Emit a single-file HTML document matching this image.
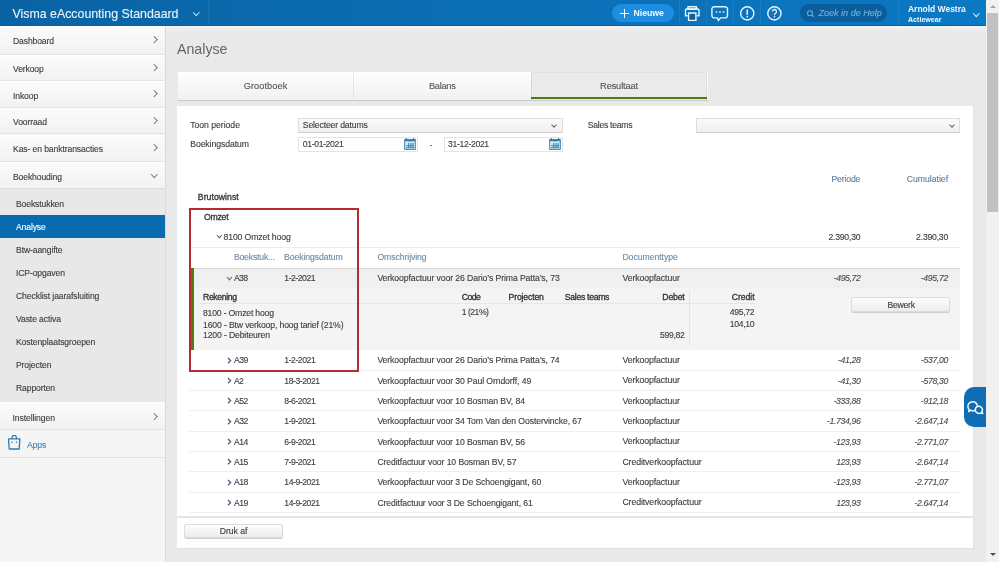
<!DOCTYPE html>
<html><head><meta charset="utf-8">
<style>
*{box-sizing:border-box;margin:0;padding:0}
html,body{width:999px;height:562px;overflow:hidden;background:#e9e9e9;font-family:"Liberation Sans",sans-serif;color:#444}
#wrap{left:0;top:0;width:999px;height:562px;will-change:transform}
div,span,i,svg{position:absolute;white-space:nowrap;line-height:1}
</style></head><body>
<div id="wrap"><div style="left:0px;top:0px;width:986px;height:26px;background:linear-gradient(to right,#0a63a3,#0b6eb4 50%,#0b79c4);border-bottom:1px solid #0a5f9c"></div>
<div style="left:12.50px;top:7.74px;font-size:12.36px;color:#e6f3fc;letter-spacing:-0.002px;-webkit-text-stroke:0.12px #e6f3fc;">Visma eAccounting Standaard</div>
<i style="left:194px;top:10px;width:4.5px;height:4.5px;border-right:1px solid #cfe6f7;border-bottom:1px solid #cfe6f7;transform:rotate(45deg)"></i>
<div style="left:208px;top:0px;width:1px;height:25px;background:rgba(255,255,255,0.07)"></div>
<div style="left:679px;top:0px;width:1px;height:25px;background:rgba(255,255,255,0.07)"></div>
<div style="left:706px;top:0px;width:1px;height:25px;background:rgba(255,255,255,0.07)"></div>
<div style="left:733px;top:0px;width:1px;height:25px;background:rgba(255,255,255,0.07)"></div>
<div style="left:760px;top:0px;width:1px;height:25px;background:rgba(255,255,255,0.07)"></div>
<div style="left:898px;top:0px;width:1px;height:25px;background:rgba(255,255,255,0.07)"></div>
<div style="left:612px;top:3.5px;width:62px;height:18.5px;border-radius:10px;background:#1d8de0"></div>
<div style="left:620px;top:12.6px;width:9px;height:1.7px;background:#fff"></div>
<div style="left:623.65px;top:8.8px;width:1.7px;height:9.3px;background:#fff"></div>
<div style="left:633.50px;top:9.49px;font-size:8.7px;color:#f2f9ff;letter-spacing:0.008px;font-weight:bold;">Nieuwe</div>
<div style="left:800px;top:3.6px;width:86.5px;height:18.6px;border-radius:10px;background:#0a5e9b"></div>
<div style="left:818.40px;top:9.30px;font-size:9.122px;color:#79b0da;letter-spacing:-0.021px;font-style:italic;-webkit-text-stroke:0.12px #79b0da;">Zoek in de Help</div>
<div style="left:908.00px;top:4.79px;font-size:8.47px;color:#f2f9ff;letter-spacing:-0.003px;font-weight:bold;">Arnold Westra</div>
<div style="left:908.00px;top:16.70px;font-size:7.1px;color:#f2f9ff;letter-spacing:-0.006px;font-weight:bold;">Actiewear</div>
<i style="left:973.8px;top:11px;width:4.5px;height:4.5px;border-right:1px solid #e6f3fc;border-bottom:1px solid #e6f3fc;transform:rotate(45deg)"></i>
<svg style="left:684px;top:5px" width="17" height="17" viewBox="0 0 17 17"><g fill="none" stroke="#eaf6ff" stroke-width="1.4" stroke-linejoin="round"><rect x="3.9" y="1.7" width="8.6" height="2.6"/><path d="M3.6 10.8 H1.5 V5.2 a1.2 1.2 0 0 1 1.2 -1.2 H13.8 a1.2 1.2 0 0 1 1.2 1.2 V10.8 H12.9"/><rect x="4.6" y="8" width="7.3" height="7.4" fill="#0b5e9e"/></g></svg>
<svg style="left:711px;top:5px" width="18" height="17" viewBox="0 0 18 17"><path d="M3.3 1.7 H14.1 a2.4 2.4 0 0 1 2.4 2.4 V10.5 a2.4 2.4 0 0 1 -2.4 2.4 H9.6 L7.3 15.6 L6.6 12.9 H3.3 a2.4 2.4 0 0 1 -2.4 -2.4 V4.1 a2.4 2.4 0 0 1 2.4 -2.4 Z" fill="none" stroke="#eaf6ff" stroke-width="1.4" stroke-linejoin="round"/><g fill="#a9d6f5"><circle cx="5.5" cy="7" r="1.1"/><circle cx="9" cy="7" r="1.1"/><circle cx="12.5" cy="7" r="1.1"/></g></svg>
<svg style="left:739px;top:5px" width="17" height="17" viewBox="0 0 17 17"><circle cx="8.25" cy="8.4" r="6.6" fill="none" stroke="#eaf6ff" stroke-width="1.4"/><rect x="7.5" y="4.6" width="1.5" height="5.2" fill="#eaf6ff"/><rect x="7.5" y="10.9" width="1.5" height="1.5" fill="#eaf6ff"/></svg>
<svg style="left:766px;top:5px" width="17" height="17" viewBox="0 0 17 17"><circle cx="8.4" cy="8.4" r="6.6" fill="none" stroke="#eaf6ff" stroke-width="1.4"/><path d="M6.3 6.6 a2.1 2.1 0 1 1 3 1.9 c-0.6 0.3 -0.8 0.7 -0.8 1.4 v0.4" fill="none" stroke="#eaf6ff" stroke-width="1.3"/><rect x="7.8" y="11" width="1.4" height="1.4" fill="#eaf6ff"/></svg>
<svg style="left:806px;top:9px" width="10" height="10" viewBox="0 0 10 10"><circle cx="4" cy="4.2" r="2.5" fill="none" stroke="#6badde" stroke-width="1.1"/><path d="M5.9 6.1 L7.7 7.8" stroke="#6badde" stroke-width="1.2"/></svg>
<div style="left:166px;top:26px;width:820px;height:6px;background:linear-gradient(#f1f3f5,#e9e9e9)"></div>
<div style="left:0px;top:26px;width:166px;height:536px;background:#f5f5f5;border-right:1px solid #dadada"></div>
<div style="left:0px;top:26px;width:165px;height:28.5px;background:linear-gradient(#fbfbfb,#f2f2f2);border-bottom:1px solid #e3e3e3;box-shadow:inset 0 1px 0 #fff"></div>
<div style="left:13.00px;top:37.48px;font-size:8.61px;color:#3c3c3c;letter-spacing:-0.128px;-webkit-text-stroke:0.12px #3c3c3c;">Dashboard</div>
<i style="left:152.3px;top:37.2px;width:4.5px;height:4.5px;border-right:1px solid #777;border-top:1px solid #777;transform:rotate(45deg)"></i>
<div style="left:0px;top:54.5px;width:165px;height:26.7px;background:linear-gradient(#fbfbfb,#f2f2f2);border-bottom:1px solid #e3e3e3;box-shadow:inset 0 1px 0 #fff"></div>
<div style="left:13.00px;top:65.08px;font-size:8.61px;color:#3c3c3c;letter-spacing:-0.128px;-webkit-text-stroke:0.12px #3c3c3c;">Verkoop</div>
<i style="left:152.3px;top:64.8px;width:4.5px;height:4.5px;border-right:1px solid #777;border-top:1px solid #777;transform:rotate(45deg)"></i>
<div style="left:0px;top:81.2px;width:165px;height:26.6px;background:linear-gradient(#fbfbfb,#f2f2f2);border-bottom:1px solid #e3e3e3;box-shadow:inset 0 1px 0 #fff"></div>
<div style="left:13.00px;top:91.73px;font-size:8.61px;color:#3c3c3c;letter-spacing:-0.126px;-webkit-text-stroke:0.12px #3c3c3c;">Inkoop</div>
<i style="left:152.3px;top:91.45px;width:4.5px;height:4.5px;border-right:1px solid #777;border-top:1px solid #777;transform:rotate(45deg)"></i>
<div style="left:0px;top:107.8px;width:165px;height:26.7px;background:linear-gradient(#fbfbfb,#f2f2f2);border-bottom:1px solid #e3e3e3;box-shadow:inset 0 1px 0 #fff"></div>
<div style="left:13.00px;top:118.38px;font-size:8.61px;color:#3c3c3c;letter-spacing:-0.122px;-webkit-text-stroke:0.12px #3c3c3c;">Voorraad</div>
<i style="left:152.3px;top:118.10000000000001px;width:4.5px;height:4.5px;border-right:1px solid #777;border-top:1px solid #777;transform:rotate(45deg)"></i>
<div style="left:0px;top:134.5px;width:165px;height:27.3px;background:linear-gradient(#fbfbfb,#f2f2f2);border-bottom:1px solid #e3e3e3;box-shadow:inset 0 1px 0 #fff"></div>
<div style="left:13.00px;top:145.38px;font-size:8.61px;color:#3c3c3c;letter-spacing:-0.102px;-webkit-text-stroke:0.12px #3c3c3c;">Kas- en banktransacties</div>
<i style="left:152.3px;top:145.1px;width:4.5px;height:4.5px;border-right:1px solid #777;border-top:1px solid #777;transform:rotate(45deg)"></i>
<div style="left:0px;top:161.8px;width:165px;height:27.0px;background:linear-gradient(#fbfbfb,#f2f2f2);border-bottom:1px solid #e3e3e3;box-shadow:inset 0 1px 0 #fff"></div>
<div style="left:13.00px;top:172.53px;font-size:8.61px;color:#3c3c3c;letter-spacing:-0.123px;-webkit-text-stroke:0.12px #3c3c3c;">Boekhouding</div>
<i style="left:152px;top:172.10000000000002px;width:4.5px;height:4.5px;border-right:1px solid #777;border-bottom:1px solid #777;transform:rotate(45deg)"></i>
<div style="left:0px;top:188.3px;width:165px;height:214px;background:#e8e8e8;border-top:1px solid #dcdcdc"></div>
<div style="left:16.00px;top:200.13px;font-size:8.61px;color:#3c3c3c;letter-spacing:-0.120px;-webkit-text-stroke:0.12px #3c3c3c;">Boekstukken</div>
<div style="left:0px;top:215px;width:165px;height:23px;background:#0a6ab0"></div>
<div style="left:16.00px;top:223.13px;font-size:8.61px;color:#fff;letter-spacing:-0.125px;-webkit-text-stroke:0.12px #fff;">Analyse</div>
<div style="left:16.00px;top:246.13px;font-size:8.61px;color:#3c3c3c;letter-spacing:-0.106px;-webkit-text-stroke:0.12px #3c3c3c;">Btw-aangifte</div>
<div style="left:16.00px;top:269.13px;font-size:8.61px;color:#3c3c3c;letter-spacing:-0.123px;-webkit-text-stroke:0.12px #3c3c3c;">ICP-opgaven</div>
<div style="left:16.00px;top:292.13px;font-size:8.61px;color:#3c3c3c;letter-spacing:-0.091px;-webkit-text-stroke:0.12px #3c3c3c;">Checklist jaarafsluiting</div>
<div style="left:16.00px;top:315.13px;font-size:8.61px;color:#3c3c3c;letter-spacing:-0.103px;-webkit-text-stroke:0.12px #3c3c3c;">Vaste activa</div>
<div style="left:16.00px;top:338.13px;font-size:8.61px;color:#3c3c3c;letter-spacing:-0.110px;-webkit-text-stroke:0.12px #3c3c3c;">Kostenplaatsgroepen</div>
<div style="left:16.00px;top:361.13px;font-size:8.61px;color:#3c3c3c;letter-spacing:-0.111px;-webkit-text-stroke:0.12px #3c3c3c;">Projecten</div>
<div style="left:16.00px;top:384.13px;font-size:8.61px;color:#3c3c3c;letter-spacing:-0.123px;-webkit-text-stroke:0.12px #3c3c3c;">Rapporten</div>
<div style="left:0px;top:402px;width:165px;height:28px;background:linear-gradient(#fbfbfb,#f2f2f2);border-bottom:1px solid #e3e3e3;box-shadow:inset 0 1px 0 #fff"></div>
<div style="left:12.50px;top:413.53px;font-size:8.61px;color:#3c3c3c;letter-spacing:-0.097px;-webkit-text-stroke:0.12px #3c3c3c;">Instellingen</div>
<i style="left:152.3px;top:413.5px;width:4.5px;height:4.5px;border-right:1px solid #777;border-top:1px solid #777;transform:rotate(45deg)"></i>
<div style="left:0px;top:430px;width:165px;height:27.5px;background:#f5f5f5;border-bottom:1px solid #e2e2e2"></div>
<div style="left:27.00px;top:441.29px;font-size:8.682px;color:#3f86bd;letter-spacing:-0.163px;-webkit-text-stroke:0.12px #3f86bd;">Apps</div>
<svg style="left:7px;top:435px" width="15" height="15" viewBox="0 0 15 15"><path d="M1.5 3.9 H12.9 L12.2 14 H2.2 Z" fill="none" stroke="#2b7ca8" stroke-width="1.3" stroke-linejoin="round"/><path d="M5 3.9 V2.6 a2.2 2.2 0 0 1 4.4 0 V3.9" fill="none" stroke="#2b7ca8" stroke-width="1.2"/><circle cx="5" cy="7.2" r="0.8" fill="#2b7ca8"/><circle cx="9.5" cy="7.2" r="0.8" fill="#2b7ca8"/></svg>
<div style="left:177.00px;top:41.51px;font-size:14.2px;color:#666;letter-spacing:-0.003px;">Analyse</div>
<div style="left:177.5px;top:72px;width:530px;height:27.5px;background:linear-gradient(#fefefe,#f1f1f1);box-shadow:0 1px 0 #c9c9c9"></div>
<div style="left:353.3px;top:73px;width:1.2px;height:25px;background:#e4e4e4"></div>
<div style="left:531px;top:72px;width:176px;height:27.5px;background:#ebebeb;border-left:1px solid #d6d6d6;border-top:1px solid #e0e0e0;border-right:1px solid #dedede"></div>
<div style="left:531px;top:96.7px;width:176px;height:2.6px;background:#4a7a10"></div>
<div style="left:243.70px;top:82.45px;font-size:9.225px;color:#555;letter-spacing:0.066px;-webkit-text-stroke:0.12px #555;">Grootboek</div>
<div style="left:429.00px;top:82.45px;font-size:9.225px;color:#555;letter-spacing:-0.281px;-webkit-text-stroke:0.12px #555;">Balans</div>
<div style="left:600.10px;top:82.45px;font-size:9.225px;color:#555;letter-spacing:-0.122px;-webkit-text-stroke:0.12px #555;">Resultaat</div>
<div style="left:177px;top:106px;width:796.5px;height:443.3px;background:#fff;border-right:1px solid #e4e4e4;border-bottom:1px solid #e0e0e0"></div>
<div style="left:190.20px;top:121.20px;font-size:8.661px;color:#3c3c3c;letter-spacing:-0.025px;-webkit-text-stroke:0.12px #3c3c3c;">Toon periode</div>
<div style="left:190.20px;top:140.40px;font-size:8.661px;color:#3c3c3c;letter-spacing:-0.075px;-webkit-text-stroke:0.12px #3c3c3c;">Boekingsdatum</div>
<div style="left:298.3px;top:118px;width:264.5px;height:14.8px;background:linear-gradient(#fbfbfb,#efefef);border:1px solid #dedede;border-bottom-color:#cfcfcf"></div>
<div style="left:302.80px;top:121.20px;font-size:8.661px;color:#3c3c3c;letter-spacing:-0.160px;-webkit-text-stroke:0.12px #3c3c3c;">Selecteer datums</div>
<i style="left:552.3px;top:123.4px;width:4px;height:4px;border-right:1px solid #666;border-bottom:1px solid #666;transform:rotate(45deg)"></i>
<div style="left:587.80px;top:121.20px;font-size:8.661px;color:#3c3c3c;letter-spacing:-0.296px;-webkit-text-stroke:0.12px #3c3c3c;">Sales teams</div>
<div style="left:696.4px;top:118px;width:264px;height:14.8px;background:linear-gradient(#fbfbfb,#efefef);border:1px solid #dedede;border-bottom-color:#cfcfcf"></div>
<i style="left:950.4px;top:123.4px;width:4px;height:4px;border-right:1px solid #666;border-bottom:1px solid #666;transform:rotate(45deg)"></i>
<div style="left:298.1px;top:136.5px;width:119.5px;height:15px;background:#fff;border:1px solid #e4e4e4"></div>
<div style="left:302.80px;top:140.40px;font-size:8.661px;color:#3c3c3c;letter-spacing:-0.367px;-webkit-text-stroke:0.12px #3c3c3c;">01-01-2021</div>
<div style="left:443.8px;top:136.5px;width:118.8px;height:15px;background:#fff;border:1px solid #e4e4e4"></div>
<div style="left:448.00px;top:140.40px;font-size:8.661px;color:#3c3c3c;letter-spacing:-0.345px;-webkit-text-stroke:0.12px #3c3c3c;">31-12-2021</div>
<div style="left:430px;top:144.5px;width:2px;height:1px;background:#777"></div>
<div style="left:403.6px;top:138.2px"><svg width="12" height="12" viewBox="0 0 12 12"><rect x="0.7" y="1.6" width="10.6" height="9.8" fill="#cdeefa" stroke="#3f7fae" stroke-width="1"/><path d="M0.7 1.6 H11.3 V3.2 H0.7 Z" fill="#3f7fae"/><path d="M3.3 3.2 Q6 1.6 8.7 3.2 Z" fill="#2a6a98"/><circle cx="2.4" cy="1.2" r="0.9" fill="#2a6a98"/><circle cx="9.6" cy="1.2" r="0.9" fill="#2a6a98"/><g fill="#4a86b0"><rect x="4" y="5" width="1.2" height="5"/><rect x="6.3" y="5" width="1.2" height="5"/><rect x="8.5" y="5" width="1.2" height="5"/><rect x="2" y="7.2" width="8" height="1"/><rect x="2" y="9.2" width="8" height="1"/></g></svg></div>
<div style="left:548.8px;top:138.2px"><svg width="12" height="12" viewBox="0 0 12 12"><rect x="0.7" y="1.6" width="10.6" height="9.8" fill="#cdeefa" stroke="#3f7fae" stroke-width="1"/><path d="M0.7 1.6 H11.3 V3.2 H0.7 Z" fill="#3f7fae"/><path d="M3.3 3.2 Q6 1.6 8.7 3.2 Z" fill="#2a6a98"/><circle cx="2.4" cy="1.2" r="0.9" fill="#2a6a98"/><circle cx="9.6" cy="1.2" r="0.9" fill="#2a6a98"/><g fill="#4a86b0"><rect x="4" y="5" width="1.2" height="5"/><rect x="6.3" y="5" width="1.2" height="5"/><rect x="8.5" y="5" width="1.2" height="5"/><rect x="2" y="7.2" width="8" height="1"/><rect x="2" y="9.2" width="8" height="1"/></g></svg></div>
<div style="left:831.50px;top:174.50px;font-size:8.661px;color:#5a7ea0;letter-spacing:-0.159px;-webkit-text-stroke:0.12px #5a7ea0;">Periode</div>
<div style="left:906.70px;top:174.50px;font-size:8.661px;color:#5a7ea0;letter-spacing:0.000px;-webkit-text-stroke:0.12px #5a7ea0;">Cumulatief</div>
<div style="left:197.80px;top:193.09px;font-size:8.7px;color:#333;letter-spacing:0.043px;-webkit-text-stroke:0.3px #333;">Brutowinst</div>
<div style="left:203.90px;top:213.19px;font-size:8.7px;color:#333;letter-spacing:-0.230px;-webkit-text-stroke:0.3px #333;">Omzet</div>
<svg style="left:216.20px;top:234.40px" width="6.80" height="4.80"><polyline points="1,1 3.40,3.80 5.80,1" fill="none" stroke="#4d6f95" stroke-width="1.15"/></svg>
<div style="left:223.50px;top:233.20px;font-size:8.661px;color:#3c3c3c;letter-spacing:-0.111px;-webkit-text-stroke:0.12px #3c3c3c;">8100 Omzet hoog</div>
<div style="left:828.40px;top:232.90px;font-size:8.661px;color:#3c3c3c;letter-spacing:-0.216px;-webkit-text-stroke:0.12px #3c3c3c;">2.390,30</div>
<div style="left:916.10px;top:232.90px;font-size:8.661px;color:#3c3c3c;letter-spacing:-0.216px;-webkit-text-stroke:0.12px #3c3c3c;">2.390,30</div>
<div style="left:190px;top:247px;width:770px;height:1px;background:#ececec"></div>
<div style="left:233.90px;top:253.20px;font-size:8.661px;color:#6a8aa8;letter-spacing:-0.184px;-webkit-text-stroke:0.12px #6a8aa8;">Boekstuk...</div>
<div style="left:284.00px;top:253.20px;font-size:8.661px;color:#6a8aa8;letter-spacing:-0.075px;-webkit-text-stroke:0.12px #6a8aa8;">Boekingsdatum</div>
<div style="left:377.40px;top:253.20px;font-size:8.661px;color:#6a8aa8;letter-spacing:-0.068px;-webkit-text-stroke:0.12px #6a8aa8;">Omschrijving</div>
<div style="left:622.40px;top:253.20px;font-size:8.661px;color:#6a8aa8;letter-spacing:-0.031px;-webkit-text-stroke:0.12px #6a8aa8;">Documenttype</div>
<div style="left:190.5px;top:268px;width:769.5px;height:82px;background:#f4f4f4"></div>
<div style="left:190.5px;top:268px;width:769.5px;height:20px;background:#f0f0f0"></div>
<div style="left:190.5px;top:267.8px;width:769.5px;height:1.3px;background:#d9d9d9"></div>
<div style="left:191.2px;top:268px;width:2.5px;height:82px;background:#56780f"></div>
<svg style="left:226.40px;top:276.00px" width="6.80" height="4.80"><polyline points="1,1 3.40,3.80 5.80,1" fill="none" stroke="#4d6f95" stroke-width="1.15"/></svg>
<div style="left:234.00px;top:274.20px;font-size:8.661px;color:#3c3c3c;letter-spacing:-0.705px;-webkit-text-stroke:0.12px #3c3c3c;">A38</div>
<div style="left:284.30px;top:274.20px;font-size:8.661px;color:#3c3c3c;letter-spacing:-0.481px;-webkit-text-stroke:0.12px #3c3c3c;">1-2-2021</div>
<div style="left:377.40px;top:274.20px;font-size:8.661px;color:#3c3c3c;letter-spacing:-0.096px;-webkit-text-stroke:0.12px #3c3c3c;">Verkoopfactuur voor 26 Dario&#8217;s Prima Patta&#8217;s, 73</div>
<div style="left:622.40px;top:274.20px;font-size:8.661px;color:#3c3c3c;letter-spacing:-0.058px;-webkit-text-stroke:0.12px #3c3c3c;">Verkoopfactuur</div>
<div style="left:833.80px;top:274.20px;font-size:8.661px;color:#4a4a4a;letter-spacing:-0.396px;font-style:italic;-webkit-text-stroke:0.12px #4a4a4a;">-495,72</div>
<div style="left:920.70px;top:274.20px;font-size:8.661px;color:#4a4a4a;letter-spacing:-0.296px;font-style:italic;-webkit-text-stroke:0.12px #4a4a4a;">-495,72</div>
<div style="left:203.00px;top:292.83px;font-size:8.7px;color:#333;letter-spacing:-0.366px;-webkit-text-stroke:0.3px #333;">Rekening</div>
<div style="left:461.70px;top:292.83px;font-size:8.7px;color:#333;letter-spacing:-0.500px;-webkit-text-stroke:0.3px #333;">Code</div>
<div style="left:508.60px;top:292.83px;font-size:8.7px;color:#333;letter-spacing:-0.169px;-webkit-text-stroke:0.3px #333;">Projecten</div>
<div style="left:564.80px;top:292.83px;font-size:8.7px;color:#333;letter-spacing:-0.317px;-webkit-text-stroke:0.3px #333;">Sales teams</div>
<div style="left:662.30px;top:292.83px;font-size:8.7px;color:#333;letter-spacing:-0.179px;-webkit-text-stroke:0.3px #333;">Debet</div>
<div style="left:731.80px;top:292.83px;font-size:8.7px;color:#333;letter-spacing:-0.081px;-webkit-text-stroke:0.3px #333;">Credit</div>
<div style="left:199px;top:303px;width:556px;height:1px;background:#e6e6e6"></div>
<div style="left:689px;top:290px;width:1px;height:55px;background:#e4e4e4"></div>
<div style="left:203.00px;top:308.70px;font-size:8.661px;color:#3c3c3c;letter-spacing:-0.196px;-webkit-text-stroke:0.12px #3c3c3c;">8100 - Omzet hoog</div>
<div style="left:203.00px;top:320.50px;font-size:8.661px;color:#3c3c3c;letter-spacing:-0.146px;-webkit-text-stroke:0.12px #3c3c3c;">1600 - Btw verkoop, hoog tarief (21%)</div>
<div style="left:203.00px;top:331.30px;font-size:8.661px;color:#3c3c3c;letter-spacing:-0.146px;-webkit-text-stroke:0.12px #3c3c3c;">1200 - Debiteuren</div>
<div style="left:461.70px;top:308.40px;font-size:8.661px;color:#3c3c3c;letter-spacing:-0.504px;-webkit-text-stroke:0.12px #3c3c3c;">1 (21%)</div>
<div style="left:729.80px;top:308.40px;font-size:8.661px;color:#3c3c3c;letter-spacing:-0.338px;-webkit-text-stroke:0.12px #3c3c3c;">495,72</div>
<div style="left:729.80px;top:319.80px;font-size:8.661px;color:#3c3c3c;letter-spacing:-0.338px;-webkit-text-stroke:0.12px #3c3c3c;">104,10</div>
<div style="left:660.00px;top:331.40px;font-size:8.661px;color:#3c3c3c;letter-spacing:-0.338px;-webkit-text-stroke:0.12px #3c3c3c;">599,82</div>
<div style="left:851.3px;top:297px;width:99.2px;height:15.3px;border-radius:2px;background:linear-gradient(#fdfdfd,#ececec);border:1px solid #dcdcdc;box-shadow:0 1px 0 #cfcfcf"></div>
<div style="left:887.40px;top:301.20px;font-size:8.661px;color:#3c3c3c;letter-spacing:-0.256px;-webkit-text-stroke:0.12px #3c3c3c;">Bewerk</div>
<svg style="left:227.20px;top:356.60px" width="4.60" height="7.20"><polyline points="1,1 3.60,3.60 1,6.20" fill="none" stroke="#3f6286" stroke-width="1.3"/></svg>
<div style="left:234.00px;top:356.20px;font-size:8.661px;color:#3c3c3c;letter-spacing:-0.564px;-webkit-text-stroke:0.12px #3c3c3c;">A39</div>
<div style="left:284.30px;top:356.20px;font-size:8.661px;color:#3c3c3c;letter-spacing:-0.459px;-webkit-text-stroke:0.12px #3c3c3c;">1-2-2021</div>
<div style="left:377.40px;top:356.20px;font-size:8.671px;color:#3c3c3c;letter-spacing:-0.097px;-webkit-text-stroke:0.12px #3c3c3c;">Verkoopfactuur voor 26 Dario&#8217;s Prima Patta&#8217;s, 74</div>
<div style="left:622.40px;top:356.16px;font-size:8.764px;color:#3c3c3c;letter-spacing:-0.111px;-webkit-text-stroke:0.12px #3c3c3c;">Verkoopfactuur</div>
<div style="left:838.04px;top:356.20px;font-size:8.661px;color:#4a4a4a;letter-spacing:-0.359px;font-style:italic;-webkit-text-stroke:0.12px #4a4a4a;">-41,28</div>
<div style="left:921.07px;top:356.20px;font-size:8.661px;color:#4a4a4a;letter-spacing:-0.358px;font-style:italic;-webkit-text-stroke:0.12px #4a4a4a;">-537,00</div>
<div style="left:189px;top:369.83px;width:771px;height:1px;background:#f0f0f0"></div>
<svg style="left:227.20px;top:376.93px" width="4.60" height="7.20"><polyline points="1,1 3.60,3.60 1,6.20" fill="none" stroke="#3f6286" stroke-width="1.3"/></svg>
<div style="left:234.00px;top:376.53px;font-size:8.661px;color:#3c3c3c;letter-spacing:-0.775px;-webkit-text-stroke:0.12px #3c3c3c;">A2</div>
<div style="left:284.30px;top:376.53px;font-size:8.661px;color:#3c3c3c;letter-spacing:-0.457px;-webkit-text-stroke:0.12px #3c3c3c;">18-3-2021</div>
<div style="left:377.40px;top:376.53px;font-size:8.671px;color:#3c3c3c;letter-spacing:-0.099px;-webkit-text-stroke:0.12px #3c3c3c;">Verkoopfactuur voor 30 Paul Orndorff, 49</div>
<div style="left:622.40px;top:376.49px;font-size:8.764px;color:#3c3c3c;letter-spacing:-0.111px;-webkit-text-stroke:0.12px #3c3c3c;">Verkoopfactuur</div>
<div style="left:838.04px;top:376.53px;font-size:8.661px;color:#4a4a4a;letter-spacing:-0.359px;font-style:italic;-webkit-text-stroke:0.12px #4a4a4a;">-41,30</div>
<div style="left:921.07px;top:376.53px;font-size:8.661px;color:#4a4a4a;letter-spacing:-0.358px;font-style:italic;-webkit-text-stroke:0.12px #4a4a4a;">-578,30</div>
<div style="left:189px;top:390.16px;width:771px;height:1px;background:#f0f0f0"></div>
<svg style="left:227.20px;top:397.26px" width="4.60" height="7.20"><polyline points="1,1 3.60,3.60 1,6.20" fill="none" stroke="#3f6286" stroke-width="1.3"/></svg>
<div style="left:234.00px;top:396.86px;font-size:8.661px;color:#3c3c3c;letter-spacing:-0.564px;-webkit-text-stroke:0.12px #3c3c3c;">A52</div>
<div style="left:284.30px;top:396.86px;font-size:8.661px;color:#3c3c3c;letter-spacing:-0.459px;-webkit-text-stroke:0.12px #3c3c3c;">8-6-2021</div>
<div style="left:377.40px;top:396.86px;font-size:8.671px;color:#3c3c3c;letter-spacing:-0.105px;-webkit-text-stroke:0.12px #3c3c3c;">Verkoopfactuur voor 10 Bosman BV, 84</div>
<div style="left:622.40px;top:396.82px;font-size:8.764px;color:#3c3c3c;letter-spacing:-0.111px;-webkit-text-stroke:0.12px #3c3c3c;">Verkoopfactuur</div>
<div style="left:833.57px;top:396.86px;font-size:8.661px;color:#4a4a4a;letter-spacing:-0.358px;font-style:italic;-webkit-text-stroke:0.12px #4a4a4a;">-333,88</div>
<div style="left:921.07px;top:396.86px;font-size:8.661px;color:#4a4a4a;letter-spacing:-0.358px;font-style:italic;-webkit-text-stroke:0.12px #4a4a4a;">-912,18</div>
<div style="left:189px;top:410.49px;width:771px;height:1px;background:#f0f0f0"></div>
<svg style="left:227.20px;top:417.59px" width="4.60" height="7.20"><polyline points="1,1 3.60,3.60 1,6.20" fill="none" stroke="#3f6286" stroke-width="1.3"/></svg>
<div style="left:234.00px;top:417.19px;font-size:8.661px;color:#3c3c3c;letter-spacing:-0.564px;-webkit-text-stroke:0.12px #3c3c3c;">A32</div>
<div style="left:284.30px;top:417.19px;font-size:8.661px;color:#3c3c3c;letter-spacing:-0.459px;-webkit-text-stroke:0.12px #3c3c3c;">1-9-2021</div>
<div style="left:377.40px;top:417.19px;font-size:8.671px;color:#3c3c3c;letter-spacing:-0.102px;-webkit-text-stroke:0.12px #3c3c3c;">Verkoopfactuur voor 34 Tom Van den Oostervincke, 67</div>
<div style="left:622.40px;top:417.15px;font-size:8.764px;color:#3c3c3c;letter-spacing:-0.111px;-webkit-text-stroke:0.12px #3c3c3c;">Verkoopfactuur</div>
<div style="left:826.88px;top:417.19px;font-size:8.661px;color:#4a4a4a;letter-spacing:-0.335px;font-style:italic;-webkit-text-stroke:0.12px #4a4a4a;">-1.734,96</div>
<div style="left:914.38px;top:417.19px;font-size:8.661px;color:#4a4a4a;letter-spacing:-0.335px;font-style:italic;-webkit-text-stroke:0.12px #4a4a4a;">-2.647,14</div>
<div style="left:189px;top:430.82px;width:771px;height:1px;background:#f0f0f0"></div>
<svg style="left:227.20px;top:437.92px" width="4.60" height="7.20"><polyline points="1,1 3.60,3.60 1,6.20" fill="none" stroke="#3f6286" stroke-width="1.3"/></svg>
<div style="left:234.00px;top:437.52px;font-size:8.661px;color:#3c3c3c;letter-spacing:-0.564px;-webkit-text-stroke:0.12px #3c3c3c;">A14</div>
<div style="left:284.30px;top:437.52px;font-size:8.661px;color:#3c3c3c;letter-spacing:-0.459px;-webkit-text-stroke:0.12px #3c3c3c;">6-9-2021</div>
<div style="left:377.40px;top:437.52px;font-size:8.671px;color:#3c3c3c;letter-spacing:-0.105px;-webkit-text-stroke:0.12px #3c3c3c;">Verkoopfactuur voor 10 Bosman BV, 56</div>
<div style="left:622.40px;top:437.48px;font-size:8.764px;color:#3c3c3c;letter-spacing:-0.111px;-webkit-text-stroke:0.12px #3c3c3c;">Verkoopfactuur</div>
<div style="left:833.57px;top:437.52px;font-size:8.661px;color:#4a4a4a;letter-spacing:-0.358px;font-style:italic;-webkit-text-stroke:0.12px #4a4a4a;">-123,93</div>
<div style="left:914.38px;top:437.52px;font-size:8.661px;color:#4a4a4a;letter-spacing:-0.335px;font-style:italic;-webkit-text-stroke:0.12px #4a4a4a;">-2.771,07</div>
<div style="left:189px;top:451.15px;width:771px;height:1px;background:#f0f0f0"></div>
<svg style="left:227.20px;top:458.25px" width="4.60" height="7.20"><polyline points="1,1 3.60,3.60 1,6.20" fill="none" stroke="#3f6286" stroke-width="1.3"/></svg>
<div style="left:234.00px;top:457.85px;font-size:8.661px;color:#3c3c3c;letter-spacing:-0.564px;-webkit-text-stroke:0.12px #3c3c3c;">A15</div>
<div style="left:284.30px;top:457.85px;font-size:8.661px;color:#3c3c3c;letter-spacing:-0.459px;-webkit-text-stroke:0.12px #3c3c3c;">7-9-2021</div>
<div style="left:377.40px;top:457.85px;font-size:8.671px;color:#3c3c3c;letter-spacing:-0.102px;-webkit-text-stroke:0.12px #3c3c3c;">Creditfactuur voor 10 Bosman BV, 57</div>
<div style="left:622.40px;top:457.81px;font-size:8.764px;color:#3c3c3c;letter-spacing:-0.105px;-webkit-text-stroke:0.12px #3c3c3c;">Creditverkoopfactuur</div>
<div style="left:836.25px;top:457.85px;font-size:8.661px;color:#4a4a4a;letter-spacing:-0.388px;font-style:italic;-webkit-text-stroke:0.12px #4a4a4a;">123,93</div>
<div style="left:914.38px;top:457.85px;font-size:8.661px;color:#4a4a4a;letter-spacing:-0.335px;font-style:italic;-webkit-text-stroke:0.12px #4a4a4a;">-2.647,14</div>
<div style="left:189px;top:471.48px;width:771px;height:1px;background:#f0f0f0"></div>
<svg style="left:227.20px;top:478.58px" width="4.60" height="7.20"><polyline points="1,1 3.60,3.60 1,6.20" fill="none" stroke="#3f6286" stroke-width="1.3"/></svg>
<div style="left:234.00px;top:478.18px;font-size:8.661px;color:#3c3c3c;letter-spacing:-0.564px;-webkit-text-stroke:0.12px #3c3c3c;">A18</div>
<div style="left:284.30px;top:478.18px;font-size:8.661px;color:#3c3c3c;letter-spacing:-0.457px;-webkit-text-stroke:0.12px #3c3c3c;">14-9-2021</div>
<div style="left:377.40px;top:478.18px;font-size:8.671px;color:#3c3c3c;letter-spacing:-0.102px;-webkit-text-stroke:0.12px #3c3c3c;">Verkoopfactuur voor 3 De Schoengigant, 60</div>
<div style="left:622.40px;top:478.14px;font-size:8.764px;color:#3c3c3c;letter-spacing:-0.111px;-webkit-text-stroke:0.12px #3c3c3c;">Verkoopfactuur</div>
<div style="left:833.57px;top:478.18px;font-size:8.661px;color:#4a4a4a;letter-spacing:-0.358px;font-style:italic;-webkit-text-stroke:0.12px #4a4a4a;">-123,93</div>
<div style="left:914.38px;top:478.18px;font-size:8.661px;color:#4a4a4a;letter-spacing:-0.335px;font-style:italic;-webkit-text-stroke:0.12px #4a4a4a;">-2.771,07</div>
<div style="left:189px;top:491.81px;width:771px;height:1px;background:#f0f0f0"></div>
<svg style="left:227.20px;top:498.91px" width="4.60" height="7.20"><polyline points="1,1 3.60,3.60 1,6.20" fill="none" stroke="#3f6286" stroke-width="1.3"/></svg>
<div style="left:234.00px;top:498.51px;font-size:8.661px;color:#3c3c3c;letter-spacing:-0.564px;-webkit-text-stroke:0.12px #3c3c3c;">A19</div>
<div style="left:284.30px;top:498.51px;font-size:8.661px;color:#3c3c3c;letter-spacing:-0.457px;-webkit-text-stroke:0.12px #3c3c3c;">14-9-2021</div>
<div style="left:377.40px;top:498.51px;font-size:8.671px;color:#3c3c3c;letter-spacing:-0.100px;-webkit-text-stroke:0.12px #3c3c3c;">Creditfactuur voor 3 De Schoengigant, 61</div>
<div style="left:622.40px;top:498.47px;font-size:8.764px;color:#3c3c3c;letter-spacing:-0.105px;-webkit-text-stroke:0.12px #3c3c3c;">Creditverkoopfactuur</div>
<div style="left:836.25px;top:498.51px;font-size:8.661px;color:#4a4a4a;letter-spacing:-0.388px;font-style:italic;-webkit-text-stroke:0.12px #4a4a4a;">123,93</div>
<div style="left:914.38px;top:498.51px;font-size:8.661px;color:#4a4a4a;letter-spacing:-0.335px;font-style:italic;-webkit-text-stroke:0.12px #4a4a4a;">-2.647,14</div>
<div style="left:189px;top:512.14px;width:771px;height:1px;background:#f0f0f0"></div>
<div style="left:177px;top:516px;width:796px;height:1.5px;background:#e4e4e4"></div>
<div style="left:184px;top:523.5px;width:99px;height:14px;border-radius:2px;background:linear-gradient(#fdfdfd,#ececec);border:1px solid #dcdcdc;box-shadow:0 1px 0 #cfcfcf"></div>
<div style="left:219.70px;top:527.20px;font-size:8.661px;color:#3c3c3c;letter-spacing:-0.036px;-webkit-text-stroke:0.12px #3c3c3c;">Druk af</div>
<div style="left:189px;top:208.3px;width:170px;height:163.7px;border:2px solid #b82a33"></div>
<div style="left:964px;top:386.6px;width:22px;height:40.4px;background:#0f6db4;border-radius:10px 0 0 10px"></div>
<svg style="left:966px;top:399px" width="19" height="17" viewBox="0 0 19 17"><path d="M4.3 11.2 L2.8 12.6 L3.1 10.4 A4.8 4.6 0 1 1 7.2 11.9 Z" fill="#0f6db4" stroke="#f0f8ff" stroke-width="1.5" stroke-linejoin="round"/><path d="M15.6 13.2 L16.8 14.6 L14.4 14.1 A3.6 3.6 0 1 1 15.6 13.2 Z" fill="#0f6db4" stroke="#f0f8ff" stroke-width="1.5" stroke-linejoin="round"/></svg>
<div style="left:986px;top:0px;width:13px;height:562px;background:#f1f1f1"></div>
<div style="left:987px;top:12.5px;width:11px;height:199px;background:#c1c1c1"></div>
<div style="left:989.5px;top:5px;width:0;height:0;border-left:3px solid transparent;border-right:3px solid transparent;border-bottom:3px solid #a3a3a3"></div>
<div style="left:989.5px;top:553px;width:0;height:0;border-left:3px solid transparent;border-right:3px solid transparent;border-top:3px solid #505050"></div>
</div></body></html>
